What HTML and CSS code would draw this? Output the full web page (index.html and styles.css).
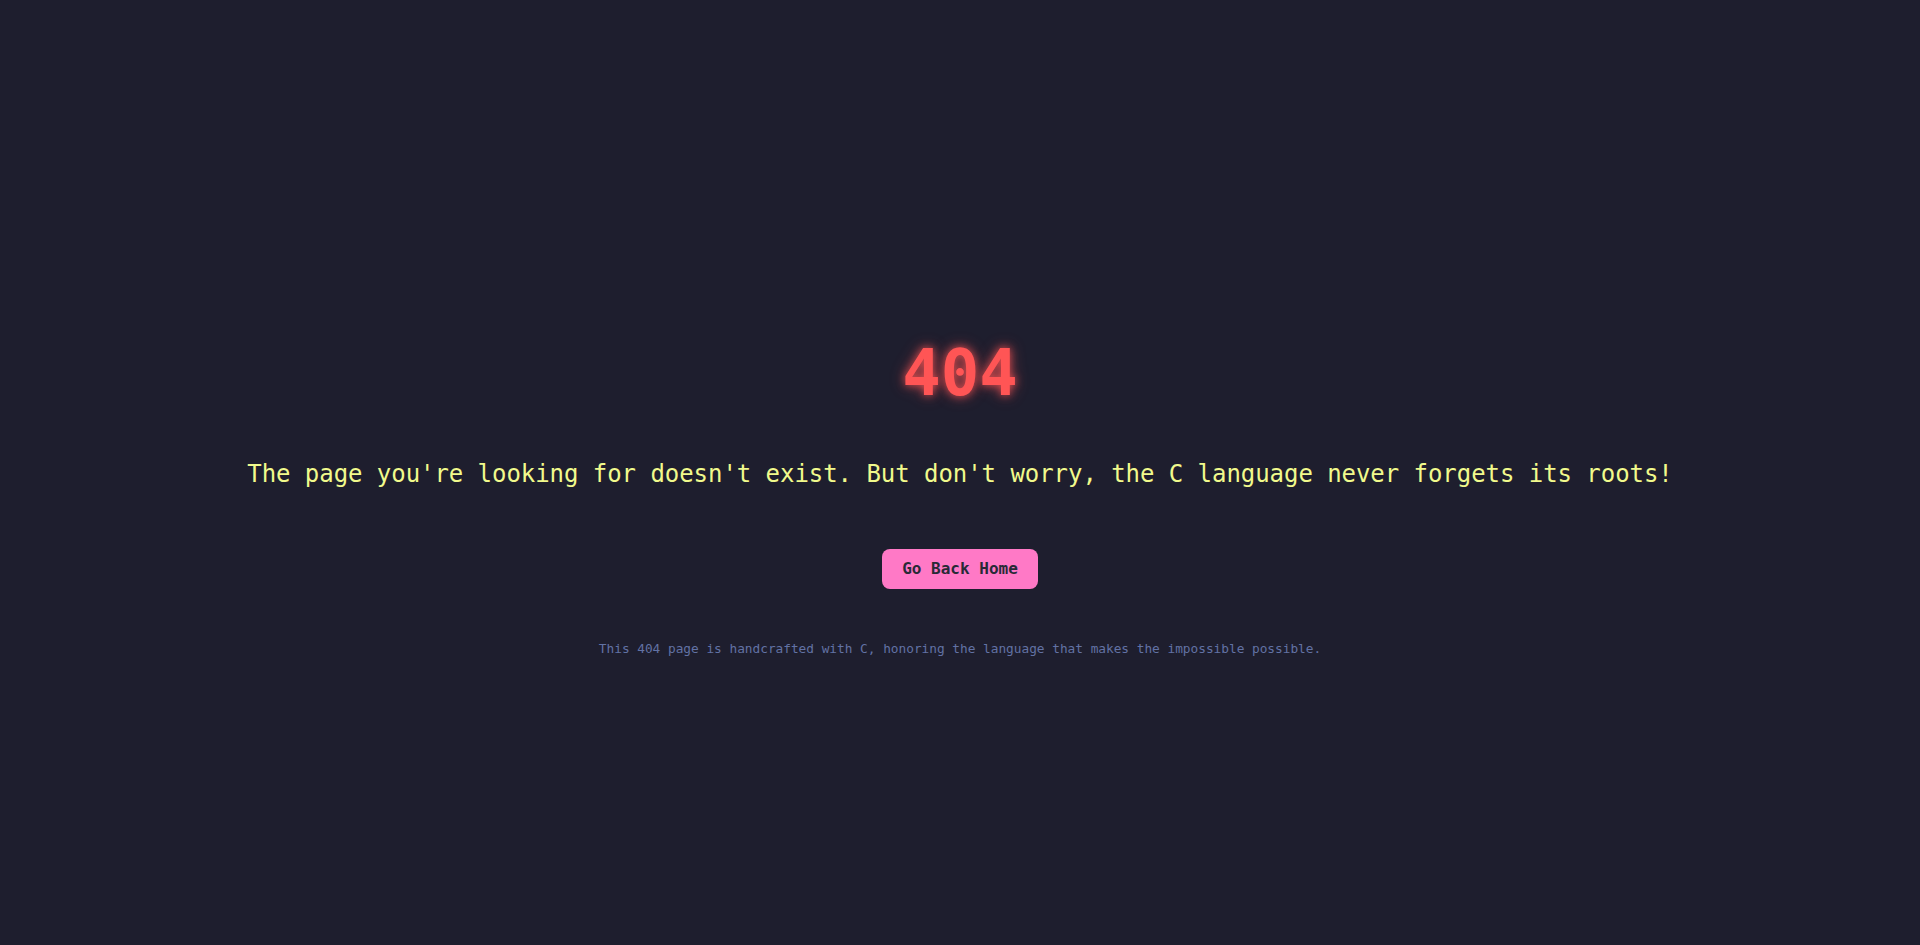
FILE: index.html
```html
<!DOCTYPE html>
<html lang="en">
<head>
<meta charset="utf-8">
<title>404 - Page Not Found</title>
<link rel="stylesheet" href="styles.css">
</head>
<body>
<main class="page">
  <h1 class="code">404</h1>
  <p class="message">The page you're looking for doesn't exist. But don't worry, the C language never forgets its roots!</p>
  <a class="home-btn" href="#">Go Back Home</a>
  <footer class="note">This 404 page is handcrafted with C, honoring the language that makes the impossible possible.</footer>
</main>
</body>
</html>
```

FILE: styles.css
```css
html, body {
  margin: 0;
  padding: 0;
  background: #1e1e2e;
  height: 100%;
}

body {
  font-family: "DejaVu Sans Mono", "Liberation Mono", monospace;
}

.page {
  display: flex;
  flex-direction: column;
  align-items: center;
  padding-top: 341px;
  box-sizing: border-box;
  min-height: 100vh;
}

.code {
  margin: 0;
  font-size: 64px;
  line-height: 1;
  font-weight: bold;
  color: #ff5555;
  text-shadow: 0 0 8px rgba(255, 85, 85, 0.8), 0 0 16px rgba(255, 85, 85, 0.45);
}

.message {
  margin: 51px 0 0;
  font-size: 24px;
  line-height: 1.5;
  letter-spacing: -0.05px;
  color: #f1fa8c;
  white-space: nowrap;
}

.home-btn {
  margin-top: 57px;
  display: inline-block;
  box-sizing: border-box;
  height: 40px;
  padding: 0 20px;
  line-height: 40px;
  font-size: 16px;
  font-weight: bold;
  color: #282a36;
  background: #ff79c6;
  border-radius: 8px;
  text-decoration: none;
}

.note {
  margin-top: 50px;
  font-size: 12.8px;
  line-height: 1.5;
  letter-spacing: -0.02px;
  color: #6272a4;
}
```
